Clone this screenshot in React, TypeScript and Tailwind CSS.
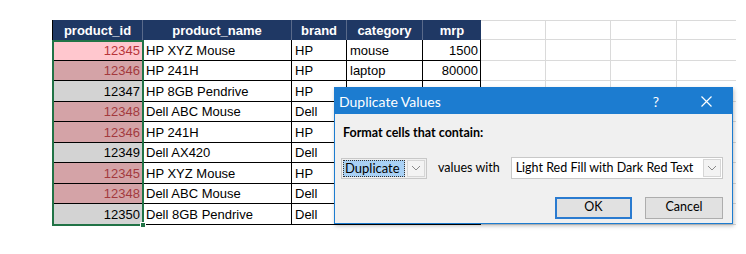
import React from 'react';

type Row = {
  id: string;
  name: string;
  brand: string;
  category: string;
  mrp: string;
  kind: 'active' | 'dup' | 'plain';
};

// category / mrp of rows 3-9 sit under the dialog, so they stay empty
const rows: Row[] = [
  { id: '12345', name: 'HP XYZ Mouse', brand: 'HP', category: 'mouse', mrp: '1500', kind: 'active' },
  { id: '12346', name: 'HP 241H', brand: 'HP', category: 'laptop', mrp: '80000', kind: 'dup' },
  { id: '12347', name: 'HP 8GB Pendrive', brand: 'HP', category: '', mrp: '', kind: 'plain' },
  { id: '12348', name: 'Dell ABC Mouse', brand: 'Dell', category: '', mrp: '', kind: 'dup' },
  { id: '12346', name: 'HP 241H', brand: 'HP', category: '', mrp: '', kind: 'dup' },
  { id: '12349', name: 'Dell AX420', brand: 'Dell', category: '', mrp: '', kind: 'plain' },
  { id: '12345', name: 'HP XYZ Mouse', brand: 'HP', category: '', mrp: '', kind: 'dup' },
  { id: '12348', name: 'Dell ABC Mouse', brand: 'Dell', category: '', mrp: '', kind: 'dup' },
  { id: '12350', name: 'Dell 8GB Pendrive', brand: 'Dell', category: '', mrp: '', kind: 'plain' },
];

const rowHeights = ['h-[21px]', 'h-[20px]', 'h-[21px]', 'h-[20px]', 'h-[21px]', 'h-[20px]', 'h-[21px]', 'h-[20px]', 'h-[21px]'];

const idCell = {
  active: 'bg-[#ffc7ce] text-[#b8353a]',
  dup: 'bg-[#d4a3a7] text-[#a33a3e]',
  plain: 'bg-[#d3d3d3] text-black',
};

const ChevronDown = () => (
  <svg width="10" height="6" viewBox="0 0 10 6" fill="none">
    <path d="M1 1 L5 5 L9 1" stroke="#8a8a8a" strokeWidth="1" />
  </svg>
);

const Sheet = () => (
  <div className="flex font-['Liberation_Sans',sans-serif] text-[13px] leading-none">
    <div className="flex flex-col border-l border-black">
      <div className="flex h-[20px] bg-[#1f3864] text-white font-bold">
        <div className="w-[90px] flex items-center justify-center border-r border-[#5a6a8a]">product_id</div>
        <div className="w-[149px] flex items-center justify-center border-r border-[#5a6a8a]">product_name</div>
        <div className="w-[55px] flex items-center justify-center border-r border-[#5a6a8a]">brand</div>
        <div className="w-[76px] flex items-center justify-center border-r border-[#5a6a8a]">category</div>
        <div className="w-[58px] flex items-center justify-center">mrp</div>
      </div>
      <div className="relative">
        {rows.map((r, i) => (
          <div key={i} className={`flex ${rowHeights[i]} border-b border-black`}>
            <div className={`w-[90px] flex items-center justify-end pr-[2px] border-r border-black ${idCell[r.kind]}`}>{r.id}</div>
            <div className="w-[149px] flex items-center pl-[3px] border-r border-black bg-white">{r.name}</div>
            <div className="w-[55px] flex items-center pl-[3px] border-r border-black bg-white">{r.brand}</div>
            <div className="w-[76px] flex items-center pl-[3px] border-r border-black bg-white">{r.category}</div>
            <div className="w-[58px] flex items-center justify-end pr-[2px] border-r border-black bg-white">{r.mrp}</div>
          </div>
        ))}
        <div className="absolute left-[-1px] top-0 w-[92px] h-[186px] border-2 border-[#217346] pointer-events-none" />
        <div className="absolute left-[87px] top-[182px] w-[6px] h-[6px] bg-[#217346] border border-white" />
      </div>
    </div>
    <div className="flex flex-col border-t border-[#dadada]">
      {[19, 21, 20, 21, 20, 21, 20, 21, 20, 21].map((h, i) => (
        <div key={i} className="flex border-b border-[#dadada]" style={{ height: h }}>
          <div className="w-[65px] border-r border-[#dadada]" />
          <div className="w-[65px] border-r border-[#dadada]" />
          <div className="w-[66px] border-r border-[#dadada]" />
          <div className="w-[59px]" />
        </div>
      ))}
    </div>
  </div>
);

const Dialog = () => (
  <div className="absolute left-[334px] top-[87px] w-[399px] h-[137px] border border-[#1c7cd0] bg-[#f0f0f0] shadow-[1px_2px_4px_rgba(0,0,0,0.25)] font-['Lato',sans-serif] text-[13px] text-black">
    <div className="h-[26px] bg-[#1c7cd0] flex items-center pl-[4px] text-white text-[14px]">
      <span>Duplicate Values</span>
      <span className="ml-auto mr-[42px] text-[14px]">?</span>
      <svg className="mr-[20px]" width="11" height="11" viewBox="0 0 11 11">
        <path d="M0.5 0.5 L10.5 10.5 M10.5 0.5 L0.5 10.5" stroke="white" strokeWidth="1.2" />
      </svg>
    </div>
    <div className="pl-[8px] pt-[10px] font-bold text-[12.5px]">Format cells that contain:</div>
    <div className="flex items-center pl-[6px] mt-[15px] h-[21px]">
      <div className="flex items-center h-[21px] w-[86px] border border-[#c8c8c8] bg-[#f0f0f0] p-[1px]">
        <div className="h-full w-[62px] bg-[#a9d1f5] border border-dotted border-[#333] flex items-center pl-[1px] text-[13px]">Duplicate</div>
        <div className="ml-[2px] h-full w-[18px] border border-[#d6d6d6] bg-[#f3f3f3] flex items-center justify-center">
          <ChevronDown />
        </div>
      </div>
      <span className="ml-[11px] text-[12.5px]">values with</span>
      <div className="ml-[11px] flex items-center h-[22px] w-[212px] border border-[#c8c8c8] bg-white pl-[4px] pr-[1px]">
        <span className="text-[12.5px]">Light Red Fill with Dark Red Text</span>
        <div className="ml-auto h-[18px] w-[18px] border border-[#d6d6d6] bg-[#f3f3f3] flex items-center justify-center">
          <ChevronDown />
        </div>
      </div>
    </div>
    <div className="flex justify-end gap-[13px] pr-[9px] mt-[18px]">
      <div className="w-[77px] h-[22px] border-2 border-[#2a7bd0] bg-[#e1e1e1] flex items-center justify-center text-[12.5px]">OK</div>
      <div className="w-[78px] h-[22px] border border-[#adadad] bg-[#e1e1e1] flex items-center justify-center text-[12.5px]">Cancel</div>
    </div>
  </div>
);

export default function App() {
  return (
    <div className="relative w-[746px] h-[254px] bg-white overflow-hidden">
      <div className="pl-[52px] pt-[20px]">
        <Sheet />
      </div>
      <Dialog />
    </div>
  );
}
